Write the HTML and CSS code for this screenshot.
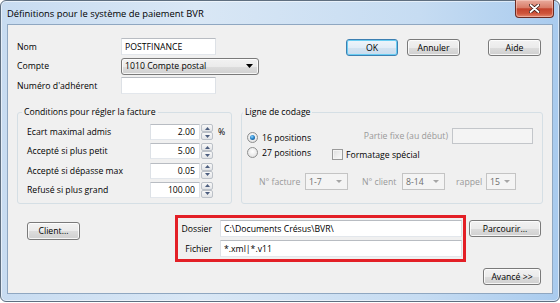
FILE: index.html
```html
<!DOCTYPE html>
<html lang="fr">
<head>
  <meta charset="UTF-8">
  <title>Définitions pour le système de paiement BVR</title>
  <link rel="stylesheet" href="styles.css">
</head>
<body>

<div class="window">
  <div class="titlebar">
    <span class="title">Définitions pour le système de paiement BVR</span>
    <button class="close" title="Fermer">
      <svg width="11" height="9" viewBox="0 0 11 9">
        <path d="M1.5 1 L9.5 8 M9.5 1 L1.5 8" stroke="#3a1913" stroke-width="3.4" stroke-linecap="round"/>
        <path d="M1.5 1 L9.5 8 M9.5 1 L1.5 8" stroke="#fff" stroke-width="1.8" stroke-linecap="round"/>
      </svg>
    </button>
  </div>

  <div class="client">
    <div class="top">
      <div class="form">
        <label>Nom</label>
        <input class="text w-name" type="text" value="POSTFINANCE">
        <label>Compte</label>
        <div class="dropdown">
          <span>1010 Compte postal</span>
          <svg width="7" height="4" viewBox="0 0 7 4"><path d="M0 0 H7 L3.5 4Z" fill="#000"/></svg>
        </div>
        <label>Numéro d'adhérent</label>
        <input class="text w-name" type="text">
      </div>
      <div class="actions">
        <button class="btn default w-ok">OK</button>
        <button class="btn w-cancel">Annuler</button>
        <button class="btn w-help">Aide</button>
      </div>
    </div>

    <div class="groups">
      <div class="group conditions">
        <span class="group-title">Conditions pour régler la facture</span>
        <div class="cond-row">
          <label>Ecart maximal admis</label>
          <input class="text num" type="text" value="2.00">
          <div class="spin"><span><svg width="5" height="3" viewBox="0 0 5 3"><path d="M0 3 L2.5 0 L5 3Z"/></svg></span><span><svg width="5" height="3" viewBox="0 0 5 3"><path d="M0 0 L5 0 L2.5 3Z"/></svg></span></div>
          <span class="unit">%</span>
        </div>
        <div class="cond-row">
          <label>Accepté si plus petit</label>
          <input class="text num" type="text" value="5.00">
          <div class="spin"><span><svg width="5" height="3" viewBox="0 0 5 3"><path d="M0 3 L2.5 0 L5 3Z"/></svg></span><span><svg width="5" height="3" viewBox="0 0 5 3"><path d="M0 0 L5 0 L2.5 3Z"/></svg></span></div>
        </div>
        <div class="cond-row">
          <label>Accepté si dépasse max</label>
          <input class="text num" type="text" value="0.05">
          <div class="spin"><span><svg width="5" height="3" viewBox="0 0 5 3"><path d="M0 3 L2.5 0 L5 3Z"/></svg></span><span><svg width="5" height="3" viewBox="0 0 5 3"><path d="M0 0 L5 0 L2.5 3Z"/></svg></span></div>
        </div>
        <div class="cond-row">
          <label>Refusé si plus grand</label>
          <input class="text num" type="text" value="100.00">
          <div class="spin"><span><svg width="5" height="3" viewBox="0 0 5 3"><path d="M0 3 L2.5 0 L5 3Z"/></svg></span><span><svg width="5" height="3" viewBox="0 0 5 3"><path d="M0 0 L5 0 L2.5 3Z"/></svg></span></div>
        </div>
      </div>

      <div class="group coding">
        <span class="group-title">Ligne de codage</span>
        <div class="coding-top">
          <div class="radios">
            <div class="radio-row"><span class="radio on"></span>16 positions</div>
            <div class="radio-row"><span class="radio"></span>27 positions</div>
          </div>
          <div class="coding-right">
            <div class="fixed-row">
              <span class="off">Partie fixe (au début)</span>
              <span class="text fixed"></span>
            </div>
            <div class="check-row"><span class="check"></span>Formatage spécial</div>
          </div>
        </div>
        <div class="combos-row">
          <span class="off lbl-facture">N° facture</span>
          <span class="combo w-43">1-7<i></i></span>
          <span class="off lbl-client">N° client</span>
          <span class="combo w-43">8-14<i></i></span>
          <span class="off lbl-rappel">rappel</span>
          <span class="combo w-30">15<i></i></span>
        </div>
      </div>
    </div>

    <div class="bottom">
      <button class="btn w-client">Client...</button>
      <div class="target">
        <label>Dossier</label>
        <input class="text" type="text" value="C:\Documents Crésus\BVR\">
        <label>Fichier</label>
        <input class="text" type="text" value="*.xml|*.v11">
      </div>
      <button class="btn w-browse">Parcourir...</button>
    </div>

    <div class="more">
      <button class="btn w-more">Avancé &gt;&gt;</button>
    </div>
  </div>
</div>

</body>
</html>
```

FILE: styles.css
```css
* {
  box-sizing: border-box;
}

body {
  margin: 0;
  background: #fff;
  font-family: "Open Sans", "Noto Sans", sans-serif;
  font-size: 8.7px;
  color: #000;
}

.window {
  width: 560px;
  height: 302px;
  border: 1px solid #5f6f80;
  border-radius: 6px;
  padding: 0 6px 7px;
  background: linear-gradient(to right, #c8dcf1 0%, #d9e7f5 35%, #c6dcf2 75%, #a9cbee 100%);
  box-shadow: inset 0 0 0 1px rgba(255, 255, 255, 0.55);
  display: flex;
  flex-direction: column;
}

.titlebar {
  height: 23px;
  display: flex;
  align-items: center;
}

.title {
  font-size: 9.4px;
  padding-top: 1px;
}

.close {
  align-self: flex-start;
  margin: -1px -1px 0 auto;
  width: 39px;
  height: 18px;
  padding: 0;
  border: 1px solid #6b2b22;
  border-top: none;
  border-radius: 0 0 4px 4px;
  background: linear-gradient(#e9ab9d 0%, #d97d69 45%, #c3432d 52%, #cf563c 80%, #e4886f 100%);
  box-shadow: inset 0 0 0 1px rgba(255, 220, 210, 0.45);
  display: flex;
  align-items: center;
  justify-content: center;
}

.client {
  height: 270px;
  border: 1px solid #8fa7c1;
  background: #f0f0f0;
  padding: 13px 9px 0;
}

/* top form + dialog buttons */

.top {
  display: flex;
  align-items: flex-start;
}

.form {
  display: grid;
  grid-template-columns: 104px auto;
  grid-auto-rows: 17px;
  row-gap: 2.5px;
  align-items: center;
}

.text {
  height: 17px;
  padding: 0 3px;
  font: inherit;
  color: #000;
  background: #fff;
  border: 1px solid;
  border-color: #b8bcc2 #dde1e6 #e3e7ec #dde1e6;
  outline: none;
}

.w-name {
  width: 95px;
}

.dropdown {
  width: 138px;
  height: 17px;
  padding: 0 5px 0 3px;
  border: 1px solid #7a7a7a;
  border-radius: 3px;
  background: linear-gradient(#f2f2f2 0%, #ebebeb 50%, #dddddd 51%, #d0d0d0 100%);
  box-shadow: inset 0 0 0 1px rgba(255, 255, 255, 0.8);
  display: flex;
  align-items: center;
  justify-content: space-between;
}

.actions {
  margin: 1px 2px 0 auto;
  display: flex;
}

.btn {
  height: 17px;
  padding: 0;
  font: inherit;
  color: #000;
  border: 1px solid #7a7a7a;
  border-radius: 3px;
  background: linear-gradient(#f2f2f2 0%, #ebebeb 50%, #dddddd 51%, #cfcfcf 100%);
  box-shadow: inset 0 0 0 1px rgba(255, 255, 255, 0.8);
}

.btn.default {
  border-color: #3c7fb1;
  box-shadow: inset 0 0 0 1px #69cdf2;
  background: linear-gradient(#eef5fb 0%, #e2edf7 50%, #d3e3f1 51%, #c9dcee 100%);
}

.w-ok { width: 52px; }
.w-cancel { width: 53px; margin-left: 9px; }
.w-help { width: 53px; margin-left: 28px; }

/* group boxes */

.groups {
  display: flex;
  gap: 9px;
  margin-top: 18px;
}

.group {
  position: relative;
  height: 92px;
  border: 1px solid #d5dfe5;
  border-radius: 3px;
}

.group-title {
  position: absolute;
  top: -7px;
  left: 4px;
  padding: 0 2px;
  line-height: 13px;
  background: #f0f0f0;
}

.conditions {
  width: 215px;
  padding: 11px 0 0 9px;
}

.coding {
  flex: 1;
  padding: 15px 9px 0 5px;
}

.coding .group-title {
  left: 1px;
}

.cond-row {
  display: flex;
  align-items: center;
  height: 16px;
  margin-bottom: 3.25px;
}

.cond-row label {
  width: 123px;
}

.num {
  width: 50px;
  height: 16px;
  text-align: right;
  padding-right: 4px;
}

.spin {
  width: 12px;
  height: 16px;
  margin-left: 1px;
  display: flex;
  flex-direction: column;
}

.spin span {
  flex: 1;
  border: 1px solid #bcc1c8;
  border-radius: 2px;
  background: linear-gradient(#f8f8f8, #e2e4e7);
  display: flex;
  align-items: center;
  justify-content: center;
}

.spin path {
  fill: #4c5d7e;
}

.unit {
  margin-left: 5px;
}

.coding-top {
  display: flex;
}

.radios {
  width: 85px;
  padding-top: 2px;
}

.radio-row {
  height: 15px;
  display: flex;
  align-items: center;
}

.radio {
  position: relative;
  width: 11px;
  height: 11px;
  margin-right: 4px;
  border-radius: 50%;
  border: 1px solid #8e8f8f;
  background: radial-gradient(circle at 50% 40%, #fff 0%, #e8e8e8 65%, #d0d0d0 100%);
}

.radio.on::after {
  content: "";
  position: absolute;
  inset: 2px;
  border-radius: 50%;
  background: radial-gradient(circle at 40% 35%, #8fd6ff 0%, #2a86cc 45%, #0d3f72 100%);
}

.coding-right {
  flex: 1;
}

.fixed-row {
  height: 16px;
  display: flex;
  align-items: center;
  justify-content: flex-end;
  gap: 4px;
}

.off {
  color: #999;
}

.fixed {
  width: 81px;
  height: 16px;
  background: #f4f4f4;
  border-color: #c3c6ca;
}

.check-row {
  height: 11px;
  margin-top: 5px;
  display: flex;
  align-items: center;
}

.check {
  width: 11px;
  height: 11px;
  margin-right: 3px;
  border: 1px solid #9a9a9a;
  background: linear-gradient(135deg, #dedede, #fbfbfb);
  box-shadow: inset 0 0 0 1px #f4f4f4;
}

.combos-row {
  height: 17px;
  margin-top: 13px;
  padding-left: 12px;
  display: flex;
  align-items: center;
}

.lbl-facture { width: 46px; }
.lbl-client { width: 40px; margin-left: 14px; }
.lbl-rappel { width: 30px; margin-left: 11px; }

.combo {
  position: relative;
  height: 17px;
  padding-left: 3px;
  color: #6d6d6d;
  border: 1px solid #c4c4c4;
  background: #f4f4f4;
  display: flex;
  align-items: center;
}

.combo i {
  position: absolute;
  right: 5px;
  top: 6px;
  border-left: 3px solid transparent;
  border-right: 3px solid transparent;
  border-top: 3px solid #a6a6a6;
}

.w-43 { width: 43px; }
.w-30 { width: 30px; }

/* folder / file */

.bottom {
  display: flex;
  align-items: flex-start;
  margin-top: 11px;
}

.w-client {
  width: 53px;
  height: 18px;
  margin: 6.5px 0 0 10px;
}

.target {
  margin-left: 95px;
  padding: 2px 1px 2px 0;
  border: 3px solid #e31f26;
  display: grid;
  grid-template-columns: 34px 242px;
  grid-auto-rows: 17px;
  column-gap: 8px;
  row-gap: 3px;
  align-items: center;
}

.target label {
  text-align: right;
}

.w-browse {
  width: 72px;
  margin: 5px 0 0 3px;
}

.more {
  display: flex;
  justify-content: flex-end;
  margin: 6px 2px 0 0;
}

.w-more {
  width: 58px;
}
```
